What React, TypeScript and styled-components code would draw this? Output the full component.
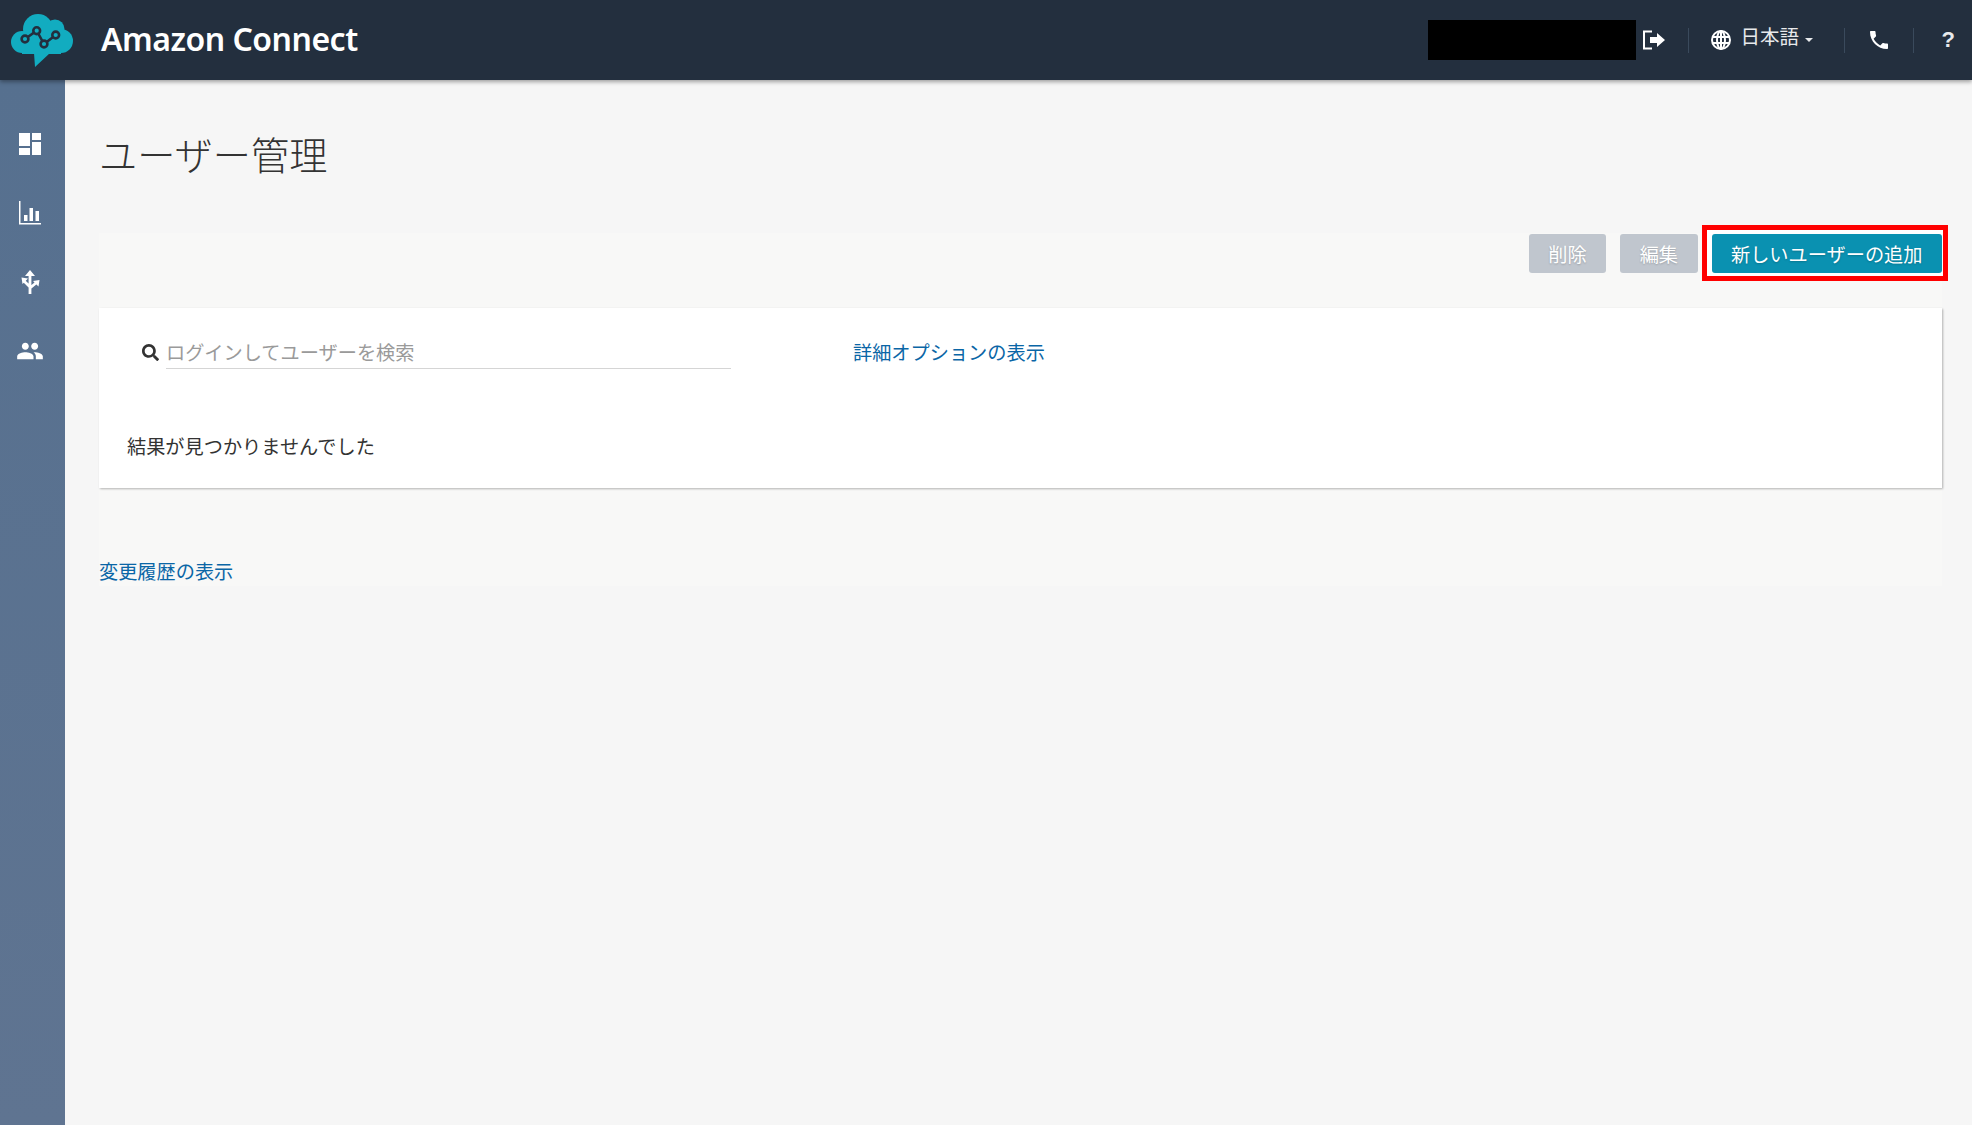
import React from 'react';
import styled, { createGlobalStyle } from 'styled-components';
import { MdPeople, MdPhone } from 'react-icons/md';
import { FaSearch } from 'react-icons/fa';

const GlobalStyle = createGlobalStyle`
  html, body {
    margin: 0;
    padding: 0;
    background: #f6f6f6;
  }
  * {
    box-sizing: border-box;
  }
  body {
    font-family: "Noto Sans CJK JP", "Noto Sans", sans-serif;
    color: #333;
  }
`;

const Page = styled.div`
  width: 1972px;
  height: 1125px;
  display: flex;
  flex-direction: column;
  overflow: hidden;
`;

const Header = styled.header`
  height: 80px;
  flex: none;
  display: flex;
  align-items: center;
  padding-left: 11px;
  background: #232f3e;
  box-shadow: 0 2px 4px rgba(0, 0, 0, 0.35);
  position: relative;
  z-index: 2;
`;

const Logo = styled.svg`
  width: 62px;
  height: 54px;
  margin-top: -1px;
`;

const Brand = styled.div`
  margin-left: 28px;
  margin-top: -2px;
  color: #fff;
  font-family: "Noto Sans", sans-serif;
  font-size: 32px;
  font-weight: 600;
  letter-spacing: -0.5px;
  line-height: 1;
`;

const HeaderRight = styled.div`
  margin-left: auto;
  display: flex;
  align-items: center;
  height: 100%;
`;

const Redacted = styled.div`
  width: 208px;
  height: 40px;
  background: #000;
  margin-top: -1px;
`;

const LogoutIcon = styled.svg`
  width: 24px;
  height: 20px;
  margin-left: 6px;
`;

const Divider = styled.div<{ $left: number }>`
  width: 1px;
  height: 25px;
  background: #3a4a5c;
  margin-left: ${({ $left }) => $left}px;
`;

const Globe = styled.svg`
  width: 20px;
  height: 20px;
  margin-left: 22px;
  margin-top: -1px;
`;

const Lang = styled.span`
  color: #e8eaec;
  font-size: 19.5px;
  line-height: 1;
  margin-left: 9.5px;
  margin-top: -8px;
`;

const Caret = styled.span`
  width: 0;
  height: 0;
  margin-left: 5.5px;
  margin-top: -1px;
  border-left: 4px solid transparent;
  border-right: 4px solid transparent;
  border-top: 4px solid #e8eaec;
`;

const PhoneIcon = styled(MdPhone)`
  width: 24px;
  height: 24px;
  color: #fff;
  margin-left: 22px;
`;

const Help = styled.span`
  color: #e8eaec;
  font-family: "Liberation Sans", sans-serif;
  font-size: 22px;
  font-weight: 700;
  margin-left: 28px;
  margin-right: 17px;
`;

const Body = styled.div`
  flex: 1;
  display: flex;
  min-height: 0;
`;

const Sidebar = styled.nav`
  width: 65px;
  flex: none;
  display: flex;
  flex-direction: column;
  align-items: center;
  gap: 43px;
  padding: 51px 5px 0 0;
  background: linear-gradient(180deg, #56708f 0%, #5f7491 100%);
`;

const NavSlot = styled.div`
  width: 28px;
  height: 26px;
  display: flex;
  align-items: center;
  justify-content: center;
  color: #fff;
`;

const NavSvg = styled.svg`
  width: 26px;
  height: 26px;
`;

const Main = styled.main`
  flex: 1;
  padding: 0 30px 0 34px;
`;

const Title = styled.h1`
  margin: 0;
  padding-top: 46px;
  height: 153px;
  font-size: 38.2px;
  font-weight: 300;
  line-height: 56px;
  color: #333;
`;

const Panel = styled.section`
  height: 353px;
  background: #f8f8f7;
  display: flex;
  flex-direction: column;
`;

const Toolbar = styled.div`
  height: 75px;
  flex: none;
  display: flex;
  justify-content: flex-end;
  align-items: flex-start;
  gap: 14px;
  padding-top: 1px;
`;

const ActionButton = styled.button<{ $primary?: boolean }>`
  height: 39px;
  padding: 0 19.5px;
  border: none;
  border-radius: 3px;
  background: ${({ $primary }) => ($primary ? '#0a91b1' : '#c0c6ce')};
  color: #fff;
  font-family: inherit;
  font-size: 19.2px;
  text-shadow: 0 1px 2px rgba(0, 0, 0, 0.2);
`;

// red annotation box drawn over the page around the add button
const HighlightFrame = styled.div`
  display: flex;
  margin: -9px -6px -8px -10px;
  padding: 4px 1px 3px 5px;
  border: 5px solid #ff0000;
  background: #fff;
`;

const Card = styled.div`
  height: 180px;
  flex: none;
  background: #fff;
  box-shadow: 1px 1px 2px rgba(0, 0, 0, 0.28);
  display: flex;
  flex-direction: column;
`;

const SearchRow = styled.div`
  display: flex;
  align-items: center;
  height: 61px;
  padding: 14px 0 0 43px;
`;

const SearchIcon = styled(FaSearch)`
  width: 17px;
  height: 17px;
  margin-top: 14px;
  color: #333;
`;

const SearchField = styled.div`
  width: 565px;
  height: 47px;
  margin-left: 7px;
  border-bottom: 1px solid #d5d5d5;
  color: #9a9a9a;
  font-size: 19.2px;
  line-height: 60px;
`;

const TextLink = styled.a`
  color: #0a66a6;
  font-size: 19.2px;
  line-height: 28px;
  cursor: pointer;
`;

const OptionsLink = styled(TextLink)`
  margin-left: 122px;
  margin-top: 13px;
`;

const EmptyText = styled.div`
  margin: 63px 0 0 28px;
  font-size: 19.2px;
  line-height: 28px;
  color: #333;
`;

const Footer = styled.div`
  margin-top: auto;
  line-height: 28px;
`;

export default function App() {
  return (
    <Page>
      <GlobalStyle />
      <Header>
        <Logo viewBox="0 0 62 54">
          <g fill="#12acc0">
            <circle cx="27" cy="16" r="15" />
            <circle cx="44" cy="16" r="9.5" />
            <circle cx="11" cy="29" r="11" />
            <circle cx="50" cy="28" r="12" />
            <path d="M11 20h39v21H11zM23 40h16L24 54z" />
          </g>
          <path d="M14 26L25.700 17.700 33 31 44.700 22" fill="none" stroke="#232f3e" strokeWidth="2.500" />
          <g fill="#12acc0" stroke="#232f3e" strokeWidth="2.600">
            <circle cx="14" cy="26" r="3.400" />
            <circle cx="25.700" cy="17.700" r="3.400" />
            <circle cx="33" cy="31" r="3.400" />
            <circle cx="44.700" cy="22" r="3.400" />
          </g>
        </Logo>
        <Brand>Amazon Connect</Brand>
        <HeaderRight>
          <Redacted />
          <LogoutIcon viewBox="0 0 24 20">
            <path d="M10 1.500H2v17h8" fill="none" stroke="#fff" strokeWidth="2" />
            <path d="M8 7h7V3l8 7-8 7v-4H8z" fill="#fff" />
          </LogoutIcon>
          <Divider $left={22} />
          <Globe viewBox="0 0 20 20">
            <g fill="none" stroke="#fff" strokeWidth="2">
              <circle cx="10" cy="10" r="9" />
              <ellipse cx="10" cy="10" rx="4" ry="9" />
              <path d="M1 7h18M1 13h18M10 1v18" />
            </g>
          </Globe>
          <Lang>日本語</Lang>
          <Caret />
          <Divider $left={31} />
          <PhoneIcon />
          <Divider $left={22} />
          <Help>?</Help>
        </HeaderRight>
      </Header>
      <Body>
        <Sidebar>
          <NavSlot>
            <NavSvg viewBox="0 0 26 26">
              <path d="M2 2h11v13H2zM15 2h9v7h-9zM15 11h9v13h-9zM2 17h11v7H2z" fill="#fff" />
            </NavSvg>
          </NavSlot>
          <NavSlot>
            <NavSvg viewBox="0 0 26 26">
              <path d="M2 1h1.500v22H24v1.500H2z" fill="#fff" />
              <path d="M7 15h3.500v6H7zM12.500 8h3.500v13h-3.500zM18.500 11H22v10h-3.500z" fill="#fff" />
            </NavSvg>
          </NavSlot>
          <NavSlot>
            <NavSvg viewBox="0 0 26 26">
              <path d="M13 6v19M13 18L7 12M13 19l6-5" fill="none" stroke="#fff" strokeWidth="2.800" />
              <path d="M13 1l5 6H8zM4.500 8.500l6.500 1-5.500 5.500zM22.500 11l-1 6.500-5.500-5.500z" fill="#fff" />
            </NavSvg>
          </NavSlot>
          <NavSlot>
            <MdPeople size={30} />
          </NavSlot>
        </Sidebar>
        <Main>
          <Title>ユーザー管理</Title>
          <Panel>
            <Toolbar>
              <ActionButton>削除</ActionButton>
              <ActionButton>編集</ActionButton>
              <HighlightFrame>
                <ActionButton $primary>新しいユーザーの追加</ActionButton>
              </HighlightFrame>
            </Toolbar>
            <Card>
              <SearchRow>
                <SearchIcon />
                <SearchField>ログインしてユーザーを検索</SearchField>
                <OptionsLink>詳細オプションの表示</OptionsLink>
              </SearchRow>
              <EmptyText>結果が見つかりませんでした</EmptyText>
            </Card>
            <Footer>
              <TextLink>変更履歴の表示</TextLink>
            </Footer>
          </Panel>
        </Main>
      </Body>
    </Page>
  );
}
